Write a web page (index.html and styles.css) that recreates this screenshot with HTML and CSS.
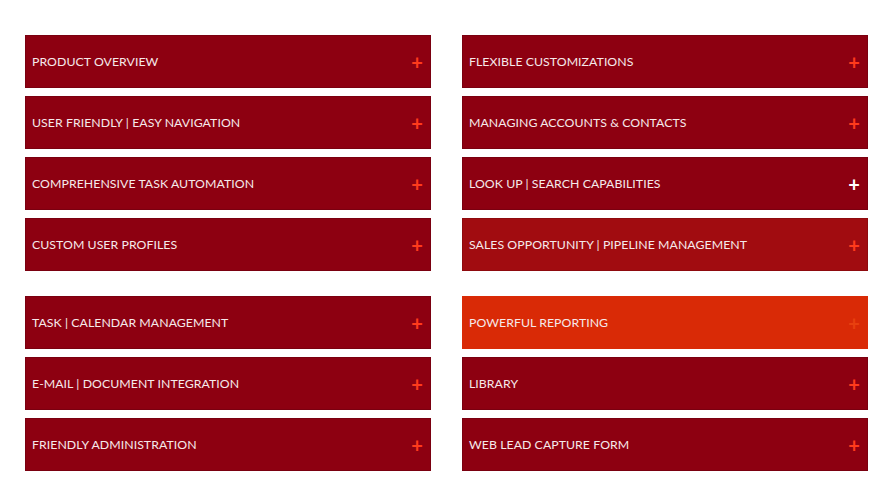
FILE: index.html
```html
<!DOCTYPE html>
<html>
<head>
<meta charset="utf-8">
<link rel="stylesheet" href="styles.css">
</head>
<body>
<div class="page">
  <div class="group">
    <div class="col">
      <div class="item"><span class="label">PRODUCT OVERVIEW</span><span class="plus">+</span></div>
      <div class="item"><span class="label">USER FRIENDLY | EASY NAVIGATION</span><span class="plus">+</span></div>
      <div class="item"><span class="label">COMPREHENSIVE TASK AUTOMATION</span><span class="plus">+</span></div>
      <div class="item"><span class="label">CUSTOM USER PROFILES</span><span class="plus">+</span></div>
    </div>
    <div class="col">
      <div class="item"><span class="label">FLEXIBLE CUSTOMIZATIONS</span><span class="plus">+</span></div>
      <div class="item"><span class="label">MANAGING ACCOUNTS &amp; CONTACTS</span><span class="plus">+</span></div>
      <div class="item"><span class="label">LOOK UP | SEARCH CAPABILITIES</span><span class="plus white">+</span></div>
      <div class="item light"><span class="label">SALES OPPORTUNITY | PIPELINE MANAGEMENT</span><span class="plus">+</span></div>
    </div>
  </div>
  <div class="group">
    <div class="col">
      <div class="item"><span class="label">TASK | CALENDAR MANAGEMENT</span><span class="plus">+</span></div>
      <div class="item"><span class="label">E-MAIL | DOCUMENT INTEGRATION</span><span class="plus">+</span></div>
      <div class="item"><span class="label">FRIENDLY ADMINISTRATION</span><span class="plus">+</span></div>
    </div>
    <div class="col">
      <div class="item active"><span class="label">POWERFUL REPORTING</span><span class="plus faint">+</span></div>
      <div class="item"><span class="label">LIBRARY</span><span class="plus">+</span></div>
      <div class="item"><span class="label">WEB LEAD CAPTURE FORM</span><span class="plus">+</span></div>
    </div>
  </div>
</div>
</body>
</html>
```
FILE: styles.css
```css
html, body {
  margin: 0;
  padding: 0;
  background: #ffffff;
}
.page {
  padding: 35px 22px 0 25px;
  display: flex;
  flex-direction: column;
  gap: 25px;
  font-family: Lato, "Open Sans", sans-serif;
}
.group {
  display: flex;
  gap: 31px;
}
.col {
  width: 406px;
  display: flex;
  flex-direction: column;
  gap: 8px;
}
.item {
  height: 53px;
  box-sizing: border-box;
  background: #8d0011;
  border: 1px solid #7a0010;
  display: flex;
  align-items: center;
  justify-content: space-between;
  padding: 0 7px 0 6px;
  color: #f6e9ea;
  font-size: 12.3px;
  letter-spacing: 0.05px;
}
.item.light {
  background: #a10c10;
  border-color: #8e0a0e;
}
.item.active {
  background: #d92a06;
  border-color: #d92a06;
}
.plus {
  color: #ff3b1c;
  font-size: 20px;
  font-weight: 700;
  line-height: 1;
}
.plus.white {
  color: #ffffff;
}
.plus.faint {
  color: #e8400f;
}
```
